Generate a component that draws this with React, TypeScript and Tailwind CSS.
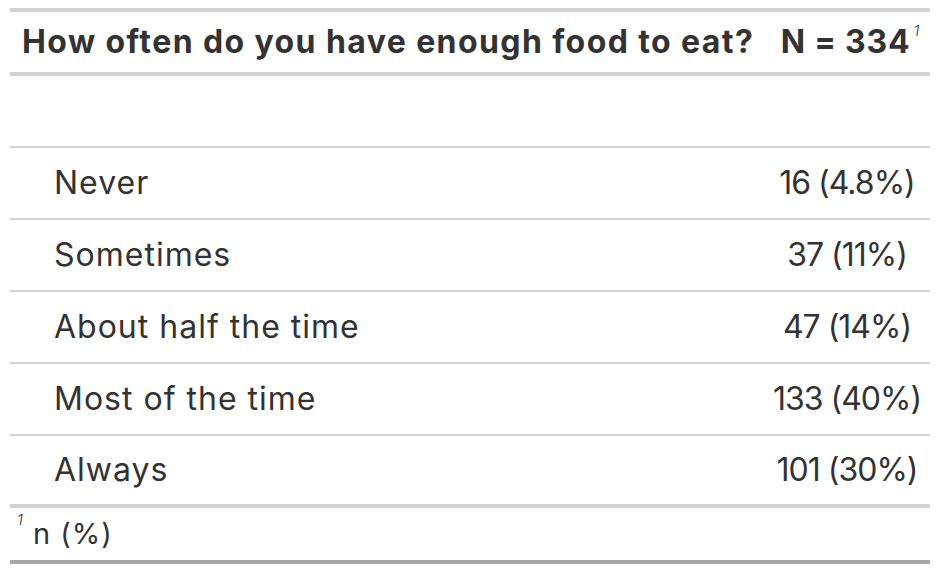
const rows = [
  { label: 'Never', value: '16 (4.8%)' },
  { label: 'Sometimes', value: '37 (11%)' },
  { label: 'About half the time', value: '47 (14%)' },
  { label: 'Most of the time', value: '133 (40%)' },
  { label: 'Always', value: '101 (30%)' },
];

export default function App() {
  return (
    <div className="bg-white px-[10px] pt-[8px] text-[#333333] font-['Inter',sans-serif] w-[938px] h-[574px]">
      <div className="w-[920px] border-t-4 border-b-4 border-t-[#d3d3d3] border-b-[#a8a8a8]">
        {/* column labels */}
        <div className="flex h-[64px] items-center border-b-4 border-[#d3d3d3] text-[32px] font-bold">
          <div className="w-[754px] pl-[12px] tracking-[1.4px] whitespace-nowrap">How often do you have enough food to eat?</div>
          <div className="w-[166px] text-center whitespace-nowrap tracking-[0.8px] pl-[6px]">
            N = 334
            <sup className="text-[15px] italic font-light tracking-normal relative -top-[17px] ml-[3px]">1</sup>
          </div>
        </div>

        {/* empty label row */}
        <div className="h-[72px] border-b-2 border-[#d3d3d3]" />

        {rows.map((r, i) => (
          <div
            key={r.label}
            className={`flex h-[72px] items-center text-[32px] ${
              i === rows.length - 1 ? 'border-b-4' : 'border-b-2'
            } border-[#d3d3d3]`}
          >
            <div className="w-[754px] pl-[44px] tracking-[1px]">{r.label}</div>
            <div className="w-[166px] text-center whitespace-nowrap tracking-[-1px]">{r.value}</div>
          </div>
        ))}

        {/* footnote */}
        <div className="flex h-[52px] items-center pl-[7px] text-[29px] tracking-[1px]">
          <sup className="text-[15px] italic font-light relative -top-[14px] mr-[9px]">1</sup>
          <span>n (%)</span>
        </div>
      </div>
    </div>
  );
}
